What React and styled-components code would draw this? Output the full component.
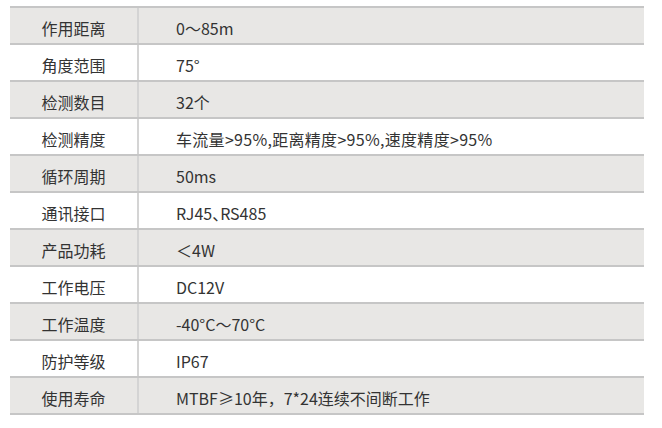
import styled, { createGlobalStyle } from "styled-components";

const GlobalStyle = createGlobalStyle`
  body {
    margin: 0;
    background: #ffffff;
    font-family: "Noto Sans CJK SC", "Noto Sans", sans-serif;
  }
`;

const Table = styled.div`
  margin: 6px 0 0 10px;
  width: 634px;
  border-top: 2px solid #c6c6c6;
`;

const Row = styled.div`
  display: grid;
  grid-template-columns: 127px 2px 1fr;
  height: 37px;
  box-sizing: border-box;
  border-bottom: 2px solid #c6c6c6;
  background: ${(props) => (props.shade ? "#e8e7e5" : "#ffffff")};
`;

const Cell = styled.div`
  display: flex;
  align-items: center;
  justify-content: ${(props) => (props.center ? "center" : "flex-start")};
  padding: 4px 0 0 ${(props) => (props.center ? "0" : "37px")};
  box-sizing: border-box;
  font-size: 16px;
  color: #333333;
  white-space: nowrap;
  letter-spacing: ${(props) => props.spacing || "0"};
  font-feature-settings: ${(props) => (props.half ? '"halt"' : "normal")};
`;

const Divider = styled.div`
  background: #d4d4d4;
`;

const specs = [
  { label: "作用距离", value: "0～85m" },
  { label: "角度范围", value: "75°" },
  { label: "检测数目", value: "32个" },
  {
    label: "检测精度",
    value: "车流量>95%,距离精度>95%,速度精度>95%",
    spacing: "0.3px",
  },
  { label: "循环周期", value: "50ms" },
  { label: "通讯接口", value: "RJ45、RS485", half: true },
  { label: "产品功耗", value: "＜4W" },
  { label: "工作电压", value: "DC12V" },
  { label: "工作温度", value: "-40°C～70°C" },
  { label: "防护等级", value: "IP67" },
  { label: "使用寿命", value: "MTBF≥10年，7*24连续不间断工作" },
];

export default function App() {
  return (
    <>
      <GlobalStyle />
      <Table>
        {specs.map((s, i) => (
          <Row key={s.label} shade={i % 2 === 0}>
            <Cell center>{s.label}</Cell>
            <Divider />
            <Cell spacing={s.spacing} half={s.half}>
              {s.value}
            </Cell>
          </Row>
        ))}
      </Table>
    </>
  );
}
